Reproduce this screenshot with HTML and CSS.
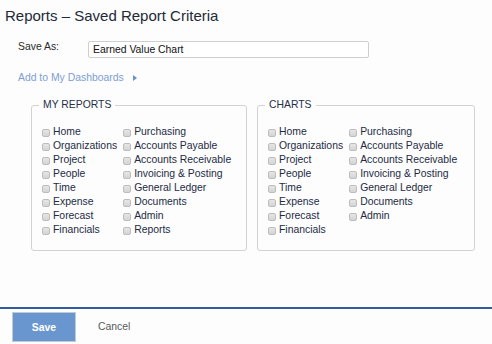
FILE: index.html
```html
<!DOCTYPE html>
<html lang="en">
<head>
  <meta charset="UTF-8" />
  <title>Reports – Saved Report Criteria</title>
  <link rel="stylesheet" href="styles.css">
</head>
<body>
  <div class="main">
    <h1 class="title">Reports – Saved Report Criteria</h1>

    <div class="save-row">
      <label class="save-label" for="saveAs">Save As:</label>
      <input class="save-input" id="saveAs" type="text" value="Earned Value Chart" />
    </div>

    <a class="dash-link" href="#">Add to My Dashboards <span class="arrow"></span></a>

    <div class="groups">
      <fieldset class="group group-reports">
        <legend>MY REPORTS</legend>
        <div class="checks">
          <label class="check"><input type="checkbox" /> Home</label>
          <label class="check"><input type="checkbox" /> Organizations</label>
          <label class="check"><input type="checkbox" /> Project</label>
          <label class="check"><input type="checkbox" /> People</label>
          <label class="check"><input type="checkbox" /> Time</label>
          <label class="check"><input type="checkbox" /> Expense</label>
          <label class="check"><input type="checkbox" /> Forecast</label>
          <label class="check"><input type="checkbox" /> Financials</label>
          <label class="check"><input type="checkbox" /> Purchasing</label>
          <label class="check"><input type="checkbox" /> Accounts Payable</label>
          <label class="check"><input type="checkbox" /> Accounts Receivable</label>
          <label class="check"><input type="checkbox" /> Invoicing &amp; Posting</label>
          <label class="check"><input type="checkbox" /> General Ledger</label>
          <label class="check"><input type="checkbox" /> Documents</label>
          <label class="check"><input type="checkbox" /> Admin</label>
          <label class="check"><input type="checkbox" /> Reports</label>
        </div>
      </fieldset>

      <fieldset class="group group-charts">
        <legend>CHARTS</legend>
        <div class="checks">
          <label class="check"><input type="checkbox" /> Home</label>
          <label class="check"><input type="checkbox" /> Organizations</label>
          <label class="check"><input type="checkbox" /> Project</label>
          <label class="check"><input type="checkbox" /> People</label>
          <label class="check"><input type="checkbox" /> Time</label>
          <label class="check"><input type="checkbox" /> Expense</label>
          <label class="check"><input type="checkbox" /> Forecast</label>
          <label class="check"><input type="checkbox" /> Financials</label>
          <label class="check"><input type="checkbox" /> Purchasing</label>
          <label class="check"><input type="checkbox" /> Accounts Payable</label>
          <label class="check"><input type="checkbox" /> Accounts Receivable</label>
          <label class="check"><input type="checkbox" /> Invoicing &amp; Posting</label>
          <label class="check"><input type="checkbox" /> General Ledger</label>
          <label class="check"><input type="checkbox" /> Documents</label>
          <label class="check"><input type="checkbox" /> Admin</label>
        </div>
      </fieldset>
    </div>
  </div>

  <div class="footer">
    <button class="btn-save" type="button">Save</button>
    <a class="btn-cancel" href="#">Cancel</a>
  </div>
</body>
</html>
```

FILE: styles.css
```css
html, body {
  height: 100%;
}

body {
  margin: 0;
  background: #fcfdfc;
  font-family: 'Liberation Sans', Arial, sans-serif;
  font-size: 10.4px;
  line-height: 12px;
  color: #222;
  display: flex;
  flex-direction: column;
}

.main {
  flex: 1;
}

.title {
  margin: 0;
  padding: 7px 5px 0;
  font-size: 15px;
  line-height: 18px;
  font-weight: normal;
  color: #1e2a38;
}

/* Save as */
.save-row {
  display: flex;
  align-items: flex-start;
  margin-top: 16px;
  padding-left: 18px;
}

.save-label {
  width: 70px;
  color: #2a2a2a;
}

.save-input {
  box-sizing: border-box;
  width: 281px;
  height: 17px;
  margin: 0;
  padding: 0 4px;
  border: 1px solid #cfcfcf;
  border-radius: 2px;
  background: #fff;
  font-family: inherit;
  font-size: 10.4px;
  color: #111;
  outline: none;
}

.dash-link {
  display: inline-flex;
  align-items: center;
  margin: 14px 0 0 18px;
  color: #7c9ed6;
  text-decoration: none;
}

.arrow {
  width: 0;
  height: 0;
  margin-left: 9px;
  border-top: 3.5px solid transparent;
  border-bottom: 3.5px solid transparent;
  border-left: 4px solid #6e8fc9;
}

/* Groups */
.groups {
  display: flex;
  gap: 10px;
  margin-top: 15px;
  padding-left: 31px;
}

.group {
  box-sizing: border-box;
  margin: 0;
  padding: 14px 10px 13px 10px;
  border: 1px solid #d2d2d2;
  border-radius: 3px;
}

.group-reports {
  width: 216px;
}

.group-charts {
  width: 218px;
}

.group legend {
  margin-left: -3px;
  padding: 0 4px;
  line-height: 12px;
  color: #26304a;
}

.checks {
  display: grid;
  grid-auto-flow: column;
  grid-template-rows: repeat(8, 14px);
  grid-template-columns: auto auto;
  justify-content: start;
  column-gap: 6px;
}

.check {
  display: flex;
  align-items: center;
  white-space: nowrap;
  color: #1e2b45;
}

.check input {
  appearance: none;
  -webkit-appearance: none;
  box-sizing: border-box;
  width: 8px;
  height: 8px;
  margin: 1px 3px 0 0;
  border: 1px solid #bdbdbd;
  border-radius: 2px;
  background: linear-gradient(#e6e6e6, #d4d4d4);
}

/* Footer */
.footer {
  display: flex;
  align-items: center;
  gap: 22px;
  padding: 3px 12px 2px;
  border-top: 2px solid #345f9f;
}

.btn-save {
  box-sizing: border-box;
  width: 64px;
  height: 30px;
  border: 1px solid #c3cad3;
  background: #6a96cf;
  color: #fff;
  font-family: inherit;
  font-size: 10.4px;
  font-weight: bold;
  cursor: pointer;
}

.btn-cancel {
  color: #5a5a5a;
  text-decoration: none;
}
```
